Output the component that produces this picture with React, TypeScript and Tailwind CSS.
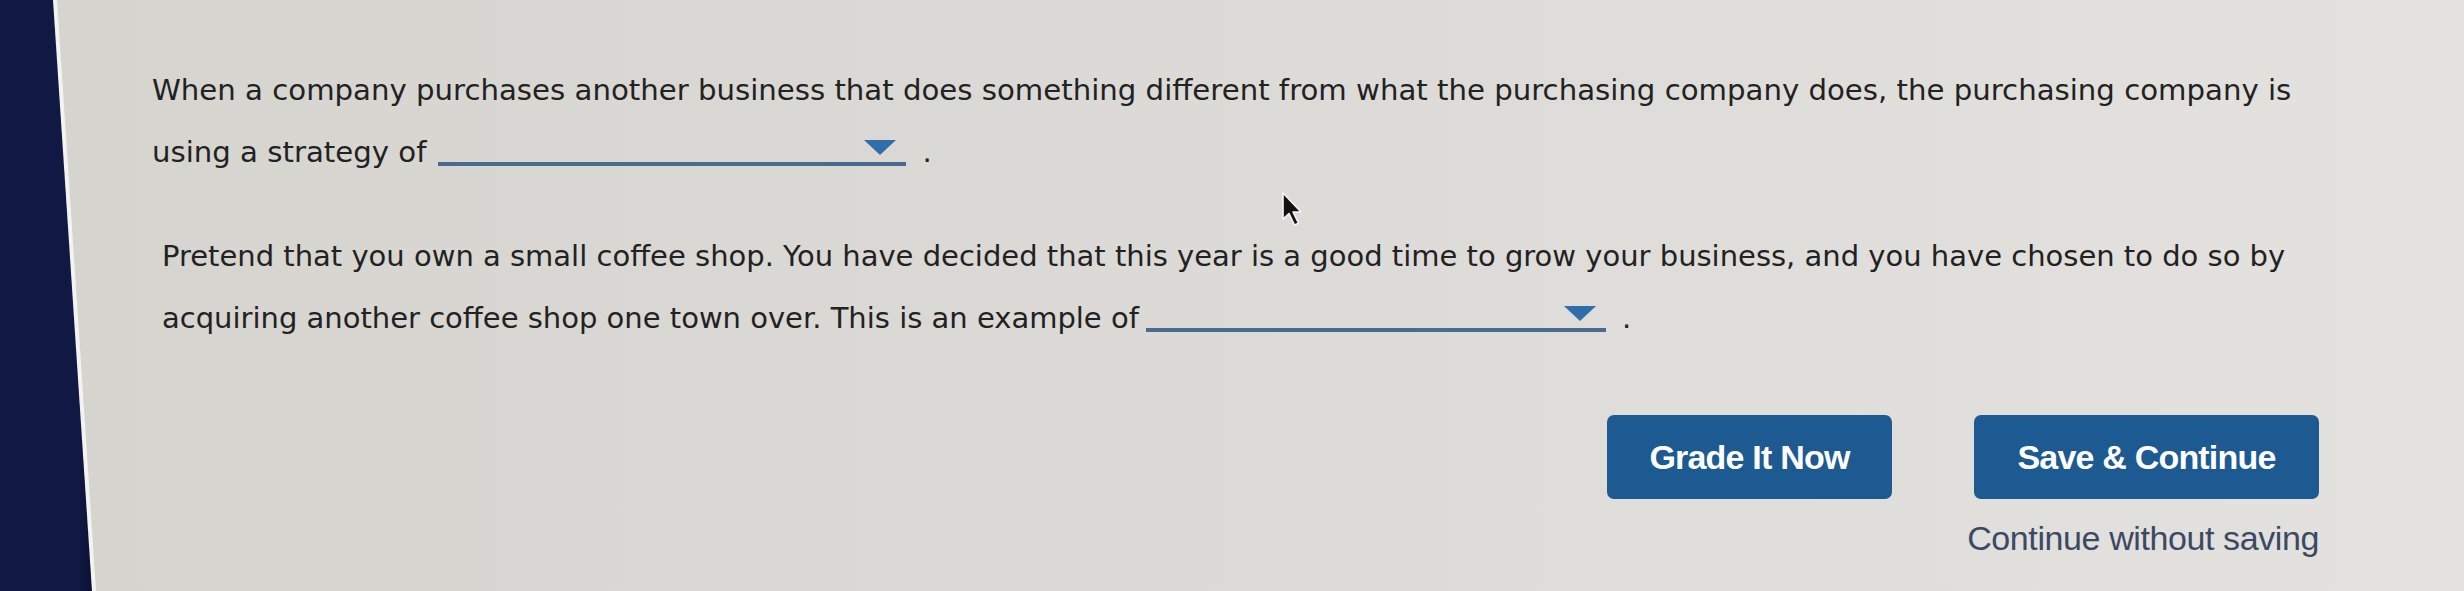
import React from "react";

function Caret() {
  return (
    <svg width="32" height="15" viewBox="0 0 32 15" className="block">
      <path d="M0 0 H32 L16 15 Z" fill="#2f6ea8" />
    </svg>
  );
}

function Blank({ wide }: { wide?: boolean }) {
  return (
    <div
      className={
        "mb-[17px] flex h-[26px] items-start justify-end border-b-[4px] border-[#4a6a8e] pr-[10px] " +
        (wide ? "ml-[12px] w-[468px]" : "ml-[7px] w-[460px]")
      }
    >
      <Caret />
    </div>
  );
}

function Pointer() {
  return (
    <svg
      width="24"
      height="38"
      viewBox="0 0 24 38"
      className="pointer-events-none absolute left-[1281px] top-[191px]"
    >
      <path
        d="M2 2 L2 28 L8 22.5 L13.5 34 L17.5 32.2 L12 21 L20 21 Z"
        fill="#111"
        stroke="#f4f4f4"
        strokeWidth="1.6"
        strokeLinejoin="round"
      />
    </svg>
  );
}

export default function App() {
  return (
    <div className="relative flex h-[591px] w-[2464px] overflow-hidden bg-[linear-gradient(90deg,#d5d4cf,#dcdbd7_55%,#e3e2df)] font-['DejaVu_Sans',Verdana,sans-serif] text-[29.2px] text-[#222]">
      {/* navy sidebar edge with its light bevel */}
      <aside className="relative w-[98px] shrink-0">
        <div className="h-full w-full bg-[#f3f3f1] [clip-path:polygon(0_0,57px_0,96px_100%,0_100%)]" />
        <div className="absolute inset-0 bg-[linear-gradient(90deg,#101844_80%,#0a0f2a)] [clip-path:polygon(0_0,53px_0,92px_100%,0_100%)]" />
      </aside>

      <main className="flex flex-1 flex-col pl-[54px] pr-[145px] pt-[59px]">
        <div className="leading-[62px]">
          <div className="whitespace-nowrap">
            When a company purchases another business that does something different from what the purchasing company does, the purchasing company is
          </div>
          <div className="flex h-[62px] items-end whitespace-nowrap">
            <span>using a strategy of</span>
            <Blank wide />
            <span className="ml-[16px]">.</span>
          </div>
        </div>

        <div className="ml-[10px] mt-[42px] text-[29px] leading-[62px]">
          <div className="whitespace-nowrap">
            Pretend that you own a small coffee shop. You have decided that this year is a good time to grow your business, and you have chosen to do so by
          </div>
          <div className="flex h-[62px] items-end whitespace-nowrap">
            <span>acquiring another coffee shop one town over. This is an example of</span>
            <Blank />
            <span className="ml-[16px]">.</span>
          </div>
        </div>

        <div className="mt-[66px] flex flex-col items-end font-['Liberation_Sans',Arial,sans-serif]">
          <div className="flex gap-[82px]">
            <button className="h-[84px] w-[285px] rounded-[7px] bg-[#1d5a92] text-[34px] font-bold tracking-[-0.8px] text-white">
              Grade It Now
            </button>
            <button className="h-[84px] w-[345px] rounded-[7px] bg-[#1d5a92] text-[34px] font-bold tracking-[-0.8px] text-white">
              Save &amp; Continue
            </button>
          </div>
          <a className="mt-[19px] text-[34px] leading-[40px] tracking-[-0.4px] text-[#3c4964]">
            Continue without saving
          </a>
        </div>
      </main>

      <Pointer />
    </div>
  );
}
